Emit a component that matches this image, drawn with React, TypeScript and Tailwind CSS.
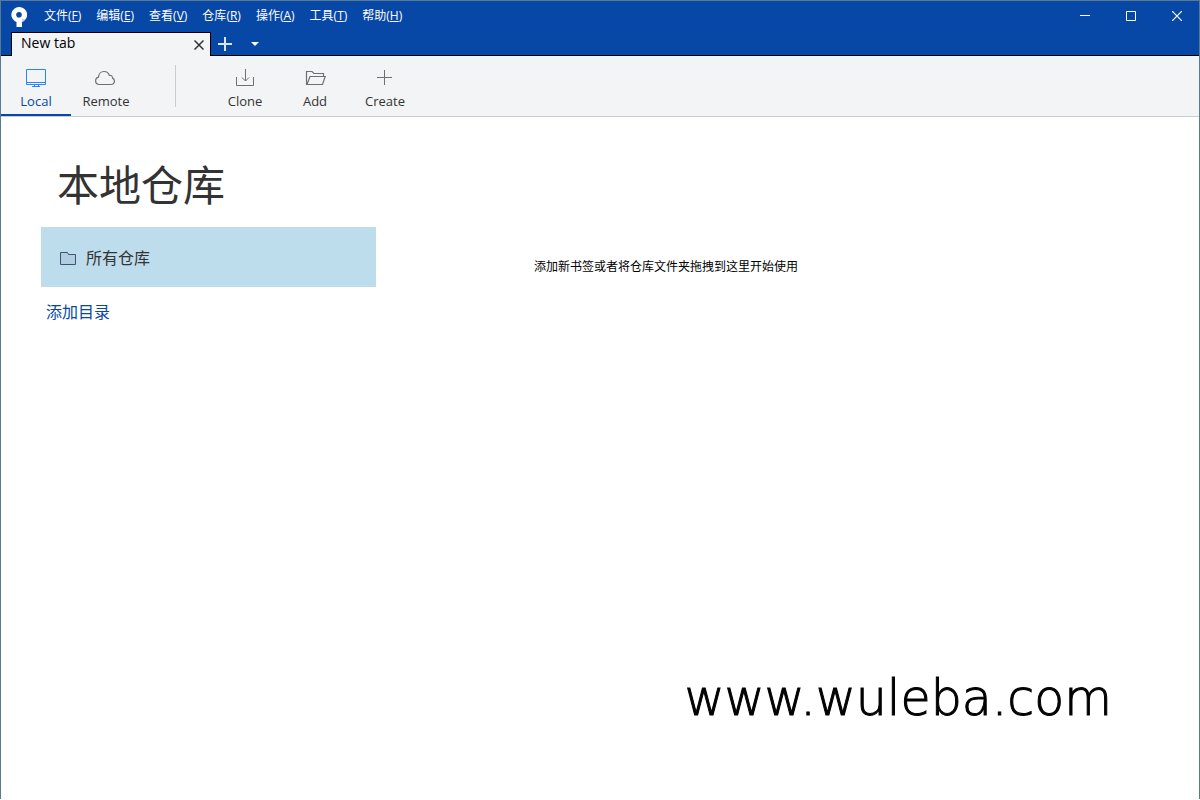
import { useState, type ReactNode } from 'react';

const MENUS = [
  { label: '文件', hotkey: 'F' },
  { label: '编辑', hotkey: 'E' },
  { label: '查看', hotkey: 'V' },
  { label: '仓库', hotkey: 'R' },
  { label: '操作', hotkey: 'A' },
  { label: '工具', hotkey: 'T' },
  { label: '帮助', hotkey: 'H' },
];

function Logo() {
  return (
    <svg className="w-4 h-5" viewBox="0 0 16 20" fill="none">
      <path
        fill="#fff"
        fillRule="evenodd"
        d="M8 0a8 7.700 0 0 1 3 14.900V20H5.500v-5.100A8 7.700 0 0 1 8 0Zm0 5a2.800 2.800 0 1 0 0 5.600A2.800 2.800 0 0 0 8 5Z"
      />
      <path d="M11 11.500 14.500 12.200a8 8 0 0 1-3.500 2.700z" fill="#9db7e0" opacity=".6" />
    </svg>
  );
}

function TitleBar() {
  return (
    <header className="flex h-[31px] items-center justify-between pl-[10px] text-white">
      <div className="flex items-center">
        <Logo />
        <nav className="ml-[17px] flex gap-[15px] pb-px text-xs">
          {MENUS.map((menu) => (
            <button key={menu.hotkey} className="whitespace-nowrap">
              {menu.label}(<span className="underline">{menu.hotkey}</span>)
            </button>
          ))}
        </nav>
      </div>
      <div className="flex pb-px">
        <button aria-label="Minimize" className="flex w-[46px] justify-center pl-[2px]">
          <svg className="size-[10px]" viewBox="0 0 10 10" stroke="#fff">
            <path d="M0 4.500h10" />
          </svg>
        </button>
        <button aria-label="Maximize" className="flex w-[46px] justify-center pl-[2px]">
          <svg className="size-[10px]" viewBox="0 0 10 10" fill="none" stroke="#fff">
            <path d="M.5.5h9v9h-9z" />
          </svg>
        </button>
        <button aria-label="Close" className="flex w-[46px] justify-center pl-[2px]">
          <svg className="size-[10px]" viewBox="0 0 10 10" stroke="#fff" strokeWidth={1.2}>
            <path d="M0 0l10 10M10 0L0 10" />
          </svg>
        </button>
      </div>
    </header>
  );
}

function TabStrip() {
  return (
    <div className="flex h-6">
      <div className="w-[10px] border-b border-black" />
      <div className="flex w-[200px] items-center justify-between border-x border-t border-black bg-[#f3f4f5] pl-[9px] pr-[6px] text-black">
        <span className="pb-1 text-sm leading-5">New tab</span>
        <button aria-label="Close tab">
          <svg className="size-[10px]" viewBox="0 0 10 10" stroke="#333" strokeWidth={1.5}>
            <path d="M.5.5l9 9M9.500.5l-9 9" />
          </svg>
        </button>
      </div>
      <div className="flex flex-1 items-center border-b border-black pl-[7px]">
        <button aria-label="New tab">
          <svg className="size-[14px]" viewBox="0 0 14 14" stroke="#dbe6f8" strokeWidth={2}>
            <path d="M7 0v14M0 7h14" />
          </svg>
        </button>
        <button aria-label="Tab list" className="ml-[19px]">
          <svg className="h-1 w-2" viewBox="0 0 8 4" fill="#fff">
            <path d="M0 0h8L4 4z" />
          </svg>
        </button>
      </div>
    </div>
  );
}

interface ToolButtonProps {
  label: string;
  active?: boolean;
  onClick?: () => void;
  children: ReactNode;
}

function ToolButton({ label, active, onClick, children }: ToolButtonProps) {
  return (
    <button
      onClick={onClick}
      className={`flex w-[70px] flex-col items-center border-b-2 pt-[11px] ${
        active ? 'border-[#0747a6] text-[#0747a6]' : 'border-transparent text-[#333]'
      }`}
    >
      <svg
        className={`h-[22px] w-[22px] ${active ? 'text-[#2684ff]' : 'text-[#707070]'}`}
        viewBox="0 0 22 22"
        fill="none"
        stroke="currentColor"
      >
        {children}
      </svg>
      <span className="mt-[2px] text-[13px] leading-5">{label}</span>
    </button>
  );
}

function Toolbar() {
  const [source, setSource] = useState('local');

  return (
    <div className="flex h-[61px] border-b border-[#ccc] bg-[#f3f4f5]">
      <ToolButton label="Local" active={source === 'local'} onClick={() => setSource('local')}>
        <path d="M1.500 2.500h19v15h-19zM1.500 15.500h19M9.500 17.500v2M13.500 17.500v2M7 19.500h8" />
      </ToolButton>
      <ToolButton label="Remote" active={source === 'remote'} onClick={() => setSource('remote')}>
        <path
          strokeWidth={1.200}
          d="M4.500 17.500C2.200 17.500.6 16 .6 13.800c0-2 1.200-3.300 2.900-3.700C3.700 6.800 6 4.500 9 4.500c2.700 0 4.600 1.500 5.300 3.800 2-.3 3.200.9 3.300 2.800 1.200.5 1.800 1.600 1.800 2.900 0 2-1.500 3.500-3.500 3.500z"
        />
      </ToolButton>
      <div className="mx-[34px] my-[9px] w-px bg-[#ccc]" />
      <div className="flex">
        <ToolButton label="Clone">
          <path d="M2.500 10v8.500h17V10M11.500 2v12M8 10.500l3.500 3.500 3.500-3.500" />
        </ToolButton>
        <ToolButton label="Add">
          <path
            strokeWidth={1.200}
            d="M3 17.500h-.5v-13H8l2 2h9.500V9M3 17.500l3-8h15.200l-2.700 8z"
          />
        </ToolButton>
        <ToolButton label="Create">
          <path d="M10.500 3v15M3 10.500h15" />
        </ToolButton>
      </div>
    </div>
  );
}

export default function App() {
  return (
    <div className="flex h-[calc(100vh-1px)] flex-col border-x border-t border-[#5b7a92] bg-white font-['Open_Sans','Noto_Sans_CJK_SC',sans-serif]">
      <div className="bg-[#0747a6]">
        <TitleBar />
        <TabStrip />
      </div>
      <Toolbar />
      <main className="flex flex-1 pl-10">
        <aside className="w-[335px] shrink-0 pt-[38px] text-[#333]">
          <h1 className="pl-4 text-[42px] leading-[60px]">本地仓库</h1>
          <button className="mt-3 flex h-[60px] w-full items-center bg-[#bddcec] pl-[19px] pt-[2px] text-base">
            <svg className="mr-[9px] h-4 w-[17px]" viewBox="0 0 17 16" fill="#b1cee0" stroke="#42526e">
              <path d="M.5 2.500h7l1 2h7v10H.5z" />
            </svg>
            所有仓库
          </button>
          <a href="#" className="mt-[13px] ml-[5px] inline-block text-base leading-6 text-[#0747a6]">
            添加目录
          </a>
        </aside>
        <section className="flex flex-1 flex-col justify-between pt-[140px] pb-[76px] text-black">
          <p className="pl-[158px] text-xs leading-5">添加新书签或者将仓库文件夹拖拽到这里开始使用</p>
          <p className="pr-[87px] text-right font-['DejaVu_Sans',sans-serif] text-[49px] font-extralight leading-12 [-webkit-text-stroke:1px_black]">
            www.wuleba.com
          </p>
        </section>
      </main>
    </div>
  );
}
